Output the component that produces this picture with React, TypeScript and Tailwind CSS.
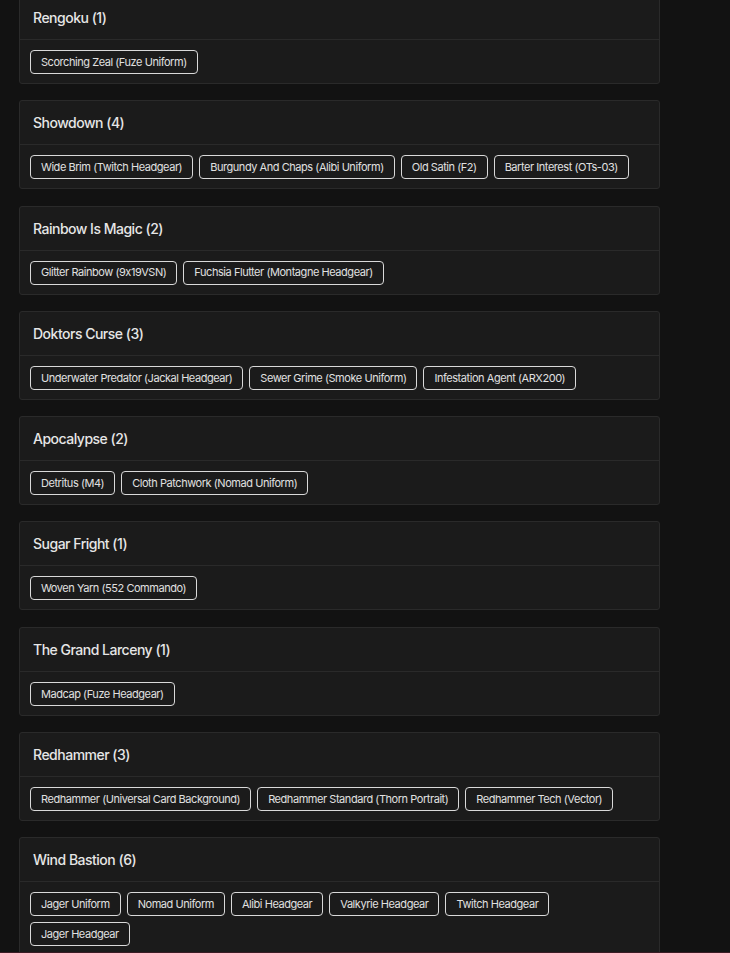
import React from "react";

interface Bundle {
  name: string;
  items: string[];
}

const bundles: Bundle[] = [
  { name: "Rengoku", items: ["Scorching Zeal (Fuze Uniform)"] },
  {
    name: "Showdown",
    items: [
      "Wide Brim (Twitch Headgear)",
      "Burgundy And Chaps (Alibi Uniform)",
      "Old Satin (F2)",
      "Barter Interest (OTs-03)",
    ],
  },
  {
    name: "Rainbow Is Magic",
    items: ["Glitter Rainbow (9x19VSN)", "Fuchsia Flutter (Montagne Headgear)"],
  },
  {
    name: "Doktors Curse",
    items: [
      "Underwater Predator (Jackal Headgear)",
      "Sewer Grime (Smoke Uniform)",
      "Infestation Agent (ARX200)",
    ],
  },
  { name: "Apocalypse", items: ["Detritus (M4)", "Cloth Patchwork (Nomad Uniform)"] },
  { name: "Sugar Fright", items: ["Woven Yarn (552 Commando)"] },
  { name: "The Grand Larceny", items: ["Madcap (Fuze Headgear)"] },
  {
    name: "Redhammer",
    items: [
      "Redhammer (Universal Card Background)",
      "Redhammer Standard (Thorn Portrait)",
      "Redhammer Tech (Vector)",
    ],
  },
  {
    name: "Wind Bastion",
    items: [
      "Jager Uniform",
      "Nomad Uniform",
      "Alibi Headgear",
      "Valkyrie Headgear",
      "Twitch Headgear",
      "Jager Headgear",
    ],
  },
];

export default function App() {
  return (
    <div
      className="h-[953px] overflow-hidden bg-[#121212] border-b border-[#3a1b24]"
      style={{ fontFamily: "Inter, 'Noto Sans', sans-serif" }}
    >
      <div className="w-[641px] ml-[19px] -mt-[5px] flex flex-col gap-[16.3px]">
        {bundles.map((bundle) => (
          <div
            key={bundle.name}
            className="bg-[#1b1b1b] border border-[#2a2a2a] rounded-[3px]"
          >
            {/* Header */}
            <div className="h-[44px] px-[13px] flex items-center border-b border-[#2a2a2a]">
              <h3 className="text-[14px] font-medium tracking-[-0.5px] text-[#e6e6e6]">
                {bundle.name} ({bundle.items.length})
              </h3>
            </div>

            {/* Items */}
            <div className="px-[10px] pt-[10px] pb-[9px] flex flex-wrap gap-[6px]">
              {bundle.items.map((item) => (
                <span
                  key={item}
                  className="h-[24px] px-[10px] flex items-center border border-[#d9d9d9] rounded-[4px] text-[11px] tracking-[-0.45px] text-[#e0e0e0] whitespace-nowrap"
                >
                  {item}
                </span>
              ))}
            </div>
          </div>
        ))}
      </div>
    </div>
  );
}
